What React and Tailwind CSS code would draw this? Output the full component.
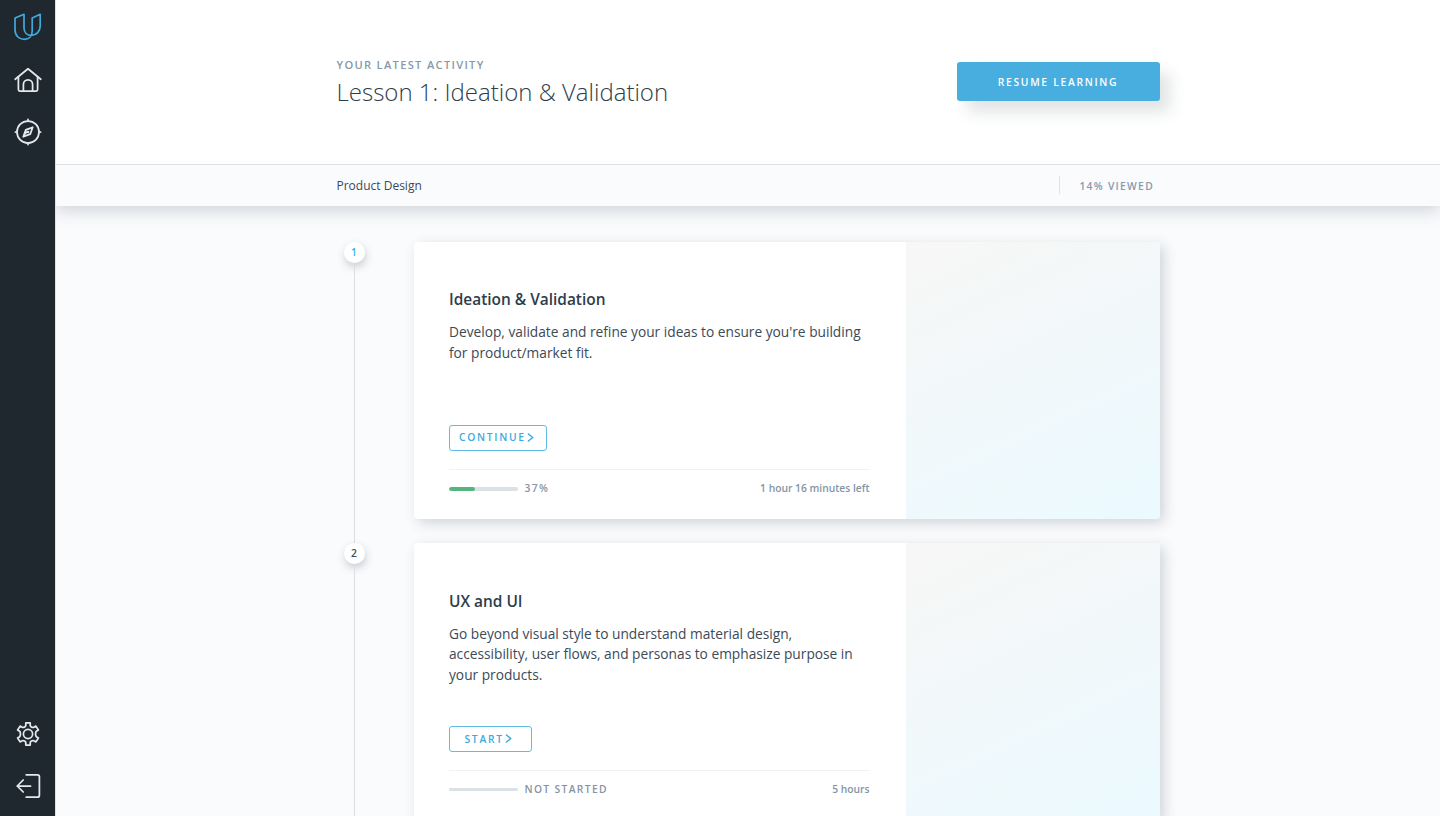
const stroke = {
  fill: 'none',
  stroke: 'currentColor',
  strokeLinecap: 'round',
  strokeLinejoin: 'round',
};

function Logo() {
  return (
    <svg className="block h-[30px] w-[30px] text-[#43a9dc]" viewBox="0 0 30 30" {...stroke} strokeWidth="1.7">
      <path d="M11 2.3 2 6V17.6C2 23.6 6 27.4 11.1 27.4C16 27.4 19.2 24.3 19.2 19V6L27.2 2.3V14C27.2 19.3 23.5 23.4 18.6 23.4C14 23.4 11 20.6 11 16Z" />
    </svg>
  );
}

function HomeIcon() {
  return (
    <svg className="block h-[30px] w-[30px]" viewBox="0 0 30 30" {...stroke} strokeWidth="1.75">
      <path d="M2.2 14.2 15 3.8 27.8 14.2" />
      <path d="M5.4 11.8V24.6Q5.4 26 6.8 26H23.2Q24.6 26 24.6 24.6V11.8" />
      <path d="M10.4 26V19.4A4.6 4.6 0 0 1 19.6 19.4V26" />
    </svg>
  );
}

function CompassIcon() {
  return (
    <svg className="block h-[30px] w-[30px]" viewBox="0 0 30 30" {...stroke} strokeWidth="1.75">
      <circle cx="15" cy="15" r="11" />
      <path d="M15 2.4V4M15 26V27.6M2.4 15H4M26 15H27.6" />
      <path d="M19.7 10.3 17.2 17.2 10.3 19.7 12.8 12.8Z" strokeWidth="1.8" />
      <circle cx="15" cy="15" r="1.3" fill="currentColor" stroke="none" />
      <path d="M10.3 19.7 12.8 12.8 14.4 15.6Z" fill="currentColor" stroke="none" />
    </svg>
  );
}

function GearIcon() {
  return (
    <svg className="block h-[30px] w-[30px]" viewBox="0 0 30 30" {...stroke} strokeWidth="1.75">
      <circle cx="15" cy="15" r="4.6" />
      <path d="M12.8 3.9H17.2V6.3Q17.3 7.4 18.3 7.9Q19.8 8.8 20.8 8.2L22.9 7.1L25.4 11L23.4 12.3Q22.5 13 22.6 15Q22.5 17 23.4 17.7L25.4 19L22.9 22.9L20.8 21.8Q19.8 21.2 18.3 22.1Q17.3 22.6 17.2 23.7V26.1H12.8V23.7Q12.7 22.6 11.7 22.1Q10.2 21.2 9.2 21.8L7.1 22.9L4.6 19L6.6 17.7Q7.5 17 7.4 15Q7.5 13 6.6 12.3L4.6 11L7.1 7.1L9.2 8.2Q10.2 8.8 11.7 7.9Q12.7 7.4 12.8 6.3Z" />
    </svg>
  );
}

function ExitIcon() {
  return (
    <svg className="block h-[30px] w-[30px]" viewBox="0 0 30 30" {...stroke} strokeWidth="1.75">
      <path d="M13.2 3.8H24.4Q26.4 3.8 26.4 5.8V24.2Q26.4 26.2 24.4 26.2H13.2" />
      <path d="M17.6 15H4.2M10.2 9 4.2 15 10.2 21" />
    </svg>
  );
}

function Chevron() {
  return (
    <svg className="block h-[9px] w-[7px]" viewBox="0 0 7 9" {...stroke} strokeWidth="1.5">
      <path d="M1.4 1 5.8 4.5 1.4 8" />
    </svg>
  );
}

const lessons = [
  {
    number: 1,
    active: true,
    title: 'Ideation & Validation',
    lines: ["Develop, validate and refine your ideas to ensure you're building", 'for product/market fit.'],
    action: 'CONTINUE',
    button: 'w-[98px] pl-[9px] h-[26px]',
    progress: 37,
    status: '37%',
    footer: 'h-[40px]',
    time: '1 hour 16 minutes left',
  },
  {
    number: 2,
    active: false,
    title: 'UX and UI',
    lines: [
      'Go beyond visual style to understand material design,',
      'accessibility, user flows, and personas to emphasize purpose in',
      'your products.',
    ],
    action: 'START',
    button: 'w-[83px] pl-[14.5px] h-[25.5px]',
    progress: 0,
    status: 'NOT STARTED',
    footer: 'h-[39px]',
    time: '5 hours',
  },
];

function Lesson({ lesson }) {
  return (
    <li className="flex h-[301.5px] shrink-0">
      <div className="flex w-[35px] shrink-0 flex-col items-center">
        <span
          className={`flex h-[21px] w-[21px] shrink-0 items-center justify-center rounded-full bg-white pt-px text-[10.3px] font-semibold shadow-[1px_4px_9px_rgba(46,61,73,0.24)] ${
            lesson.active ? 'text-[#43aede]' : 'text-[#3c4a56]'
          }`}
        >
          {lesson.number}
        </span>
        <span className="w-px flex-1 bg-[#dbdee2]" />
      </div>
      <article className="ml-[42px] flex h-[277.5px] w-[746px] overflow-hidden rounded-[4px] bg-white shadow-[4px_4px_13px_rgba(46,61,73,0.2)]">
        <div className="flex w-[492px] shrink-0 flex-col pr-[36px] pl-[35.5px]">
          <h2 className="mt-[47.5px] text-[15.43px] leading-[21px] font-semibold text-[#2e3d49]">{lesson.title}</h2>
          <p className="mt-[12px] h-[102.5px] text-[13.72px] leading-[20.57px] whitespace-nowrap text-[#3c4a56]">
            {lesson.lines.map((line) => (
              <span key={line} className="block">
                {line}
              </span>
            ))}
          </p>
          <button
            className={`flex shrink-0 items-center gap-[1.5px] rounded-[3px] border border-[#5fbce6] text-[10.29px] font-semibold tracking-[1.71px] text-[#3caade] ${lesson.button}`}
          >
            <span className="pt-px">{lesson.action}</span>
            <Chevron />
          </button>
          <div
            className={`mt-[18px] flex items-center border-t border-[#f0f2f4] text-[10.29px] font-semibold text-[#8495a6] ${lesson.footer}`}
          >
            <span className="h-[3.5px] w-[69px] overflow-hidden rounded-full bg-[#dbe2e6]">
              <span className="block h-full rounded-full bg-[#53b77d]" style={{ width: `${lesson.progress}%` }} />
            </span>
            <span className="ml-[6.5px] tracking-[1.35px]">{lesson.status}</span>
            <span className="ml-auto">{lesson.time}</span>
          </div>
        </div>
        <div className="flex-1 bg-[linear-gradient(155deg,#f7f7f6_0%,#f2f8fa_45%,#ebfaff_100%)]" />
      </article>
    </li>
  );
}

export default function App() {
  return (
    <div className="flex h-[816px] w-[1440px] overflow-hidden bg-[#fafbfd] font-['Open_Sans',sans-serif]">
      <nav className="z-10 flex w-[55px] shrink-0 flex-col items-center bg-[#1f272f] pt-[12px] pb-[15px] text-[#e4e9ed] shadow-[1px_0_0_#dfe2e5]">
        <Logo />
        <div className="mt-[23px]">
          <HomeIcon />
        </div>
        <div className="mt-[22px]">
          <CompassIcon />
        </div>
        <div className="mt-auto">
          <GearIcon />
        </div>
        <div className="mt-[22px]">
          <ExitIcon />
        </div>
      </nav>
      <div className="flex min-w-0 flex-1 flex-col">
        <header className="z-[2] flex h-[165px] shrink-0 justify-between border-b border-[#dde0e4] bg-white pr-[280.5px] pl-[281.5px]">
          <div className="mt-[57px]">
            <p className="text-[11.14px] leading-[15px] font-semibold tracking-[1.3px] text-[#8799aa]">YOUR LATEST ACTIVITY</p>
            <h1 className="mt-[3px] text-[24px] leading-[33px] font-light text-[#2e3d49]">Lesson 1: Ideation &amp; Validation</h1>
          </div>
          <button className="mt-[62px] h-[39px] w-[203px] rounded-[3px] bg-[#48aedf] pt-[2px] text-[10.29px] font-semibold tracking-[1.71px] text-white shadow-[10px_11px_15px_rgba(46,61,73,0.14)]">
            RESUME LEARNING
          </button>
        </header>
        <div className="z-[1] flex h-[41px] shrink-0 items-center justify-between bg-[#fafbfd] pr-[286px] pl-[281.5px] shadow-[0_4px_18px_rgba(46,61,73,0.22)]">
          <span className="text-[12px] text-[#3c4a56]">Product Design</span>
          <span className="mt-[-1px] flex h-[18px] items-center border-l border-[#dfe2e6] pt-[4px] pl-[19px] text-[10.29px] font-semibold tracking-[1.3px] text-[#8799aa]">
            14% VIEWED
          </span>
        </div>
        <ol className="mt-[35.5px] flex flex-col pl-[281.5px]">
          {lessons.map((lesson) => (
            <Lesson key={lesson.number} lesson={lesson} />
          ))}
        </ol>
      </div>
    </div>
  );
}
